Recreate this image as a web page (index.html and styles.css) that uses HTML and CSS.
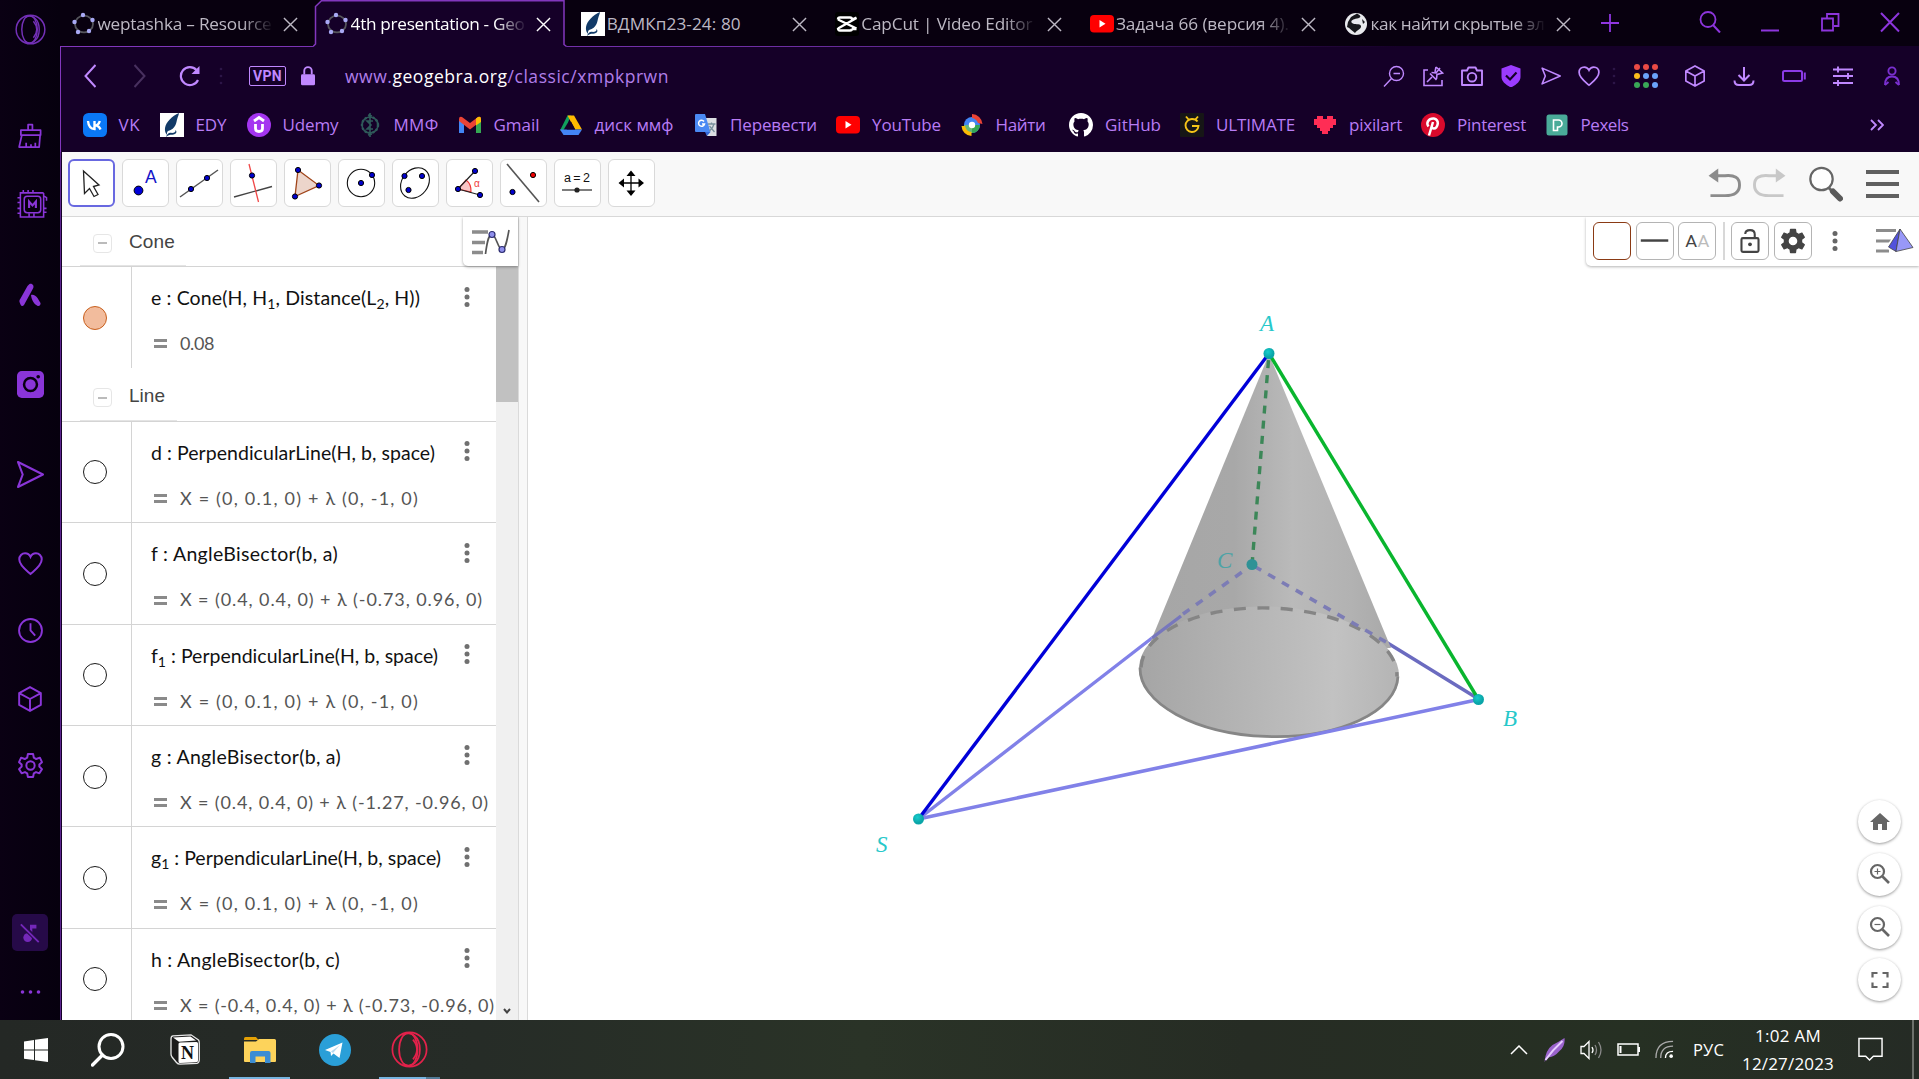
FILE: index.html
```html
<!DOCTYPE html>
<html lang="en">
<head>
<meta charset="utf-8">
<title>4th presentation - GeoGebra</title>
<link rel="stylesheet" href="styles.css">
</head>
<body>
<svg class="defs" width="0" height="0" aria-hidden="true">
  <defs>
    <symbol id="x" viewBox="0 0 16 16"><path d="M1 1L15 15M15 1L1 15" fill="none" stroke="currentColor" stroke-width="1.5"/></symbol>
    <symbol id="ggb" viewBox="0 0 24 24"><ellipse cx="12" cy="12" rx="9" ry="8.4" fill="none" stroke="#55555c" stroke-width="1.8"/><g fill="#a9a9f5"><circle cx="11" cy="3" r="2.2"/><circle cx="20.500" cy="8" r="2.200"/><circle cx="17" cy="19" r="2.200"/><circle cx="6" cy="20" r="2.200"/><circle cx="2.500" cy="10" r="2.200"/></g></symbol>
    <symbol id="quill" viewBox="0 0 24 24"><path fill="#fff" d="M0 0h24v24H0z"/><path fill="#123a68" d="M19 0C12 3 6 9 5 15c-.4 3 .5 5 2 7-.2-2 0-3 1-4 4-1 6-3 7.500-6 1.200-2.500 1-4 2-7 .6-2 1.300-3 1.500-5zM6 24c1-3 3-5 6-4 2 0 4-1 3.500-3 2 2 .5 4-2 4.500-3 .5-5 0-7.500 2.500z"/></symbol>
    <symbol id="yt" viewBox="0 0 24 24"><rect y="3" width="24" height="17.500" rx="4" fill="#f00"/><path d="M9.500 8v7.500l6-3.750z" fill="#fff"/></symbol>
    <symbol id="cube" viewBox="0 0 24 24"><path d="M12 1L22 6.500V17.500L12 23L2 17.500V6.500zM2 6.500L12 12L22 6.500M12 12V23" fill="none" stroke="currentColor" stroke-width="1.800" stroke-linejoin="round"/></symbol>
    <symbol id="heart" viewBox="0 0 24 24"><path d="M12 22C8 18.500 1.200 14 1.200 8C1.200 4.500 3.800 2.200 6.800 2.200C9.200 2.200 11 3.500 12 5.600C13 3.500 14.800 2.200 17.200 2.200C20.200 2.200 22.800 4.500 22.800 8C22.800 14 16 18.500 12 22z" fill="none" stroke="currentColor" stroke-width="1.900"/></symbol>
    <symbol id="send" viewBox="0 0 26 26"><path d="M1 1L25 13L1 25L5.500 13z" fill="none" stroke="currentColor" stroke-width="2" stroke-linejoin="round"/></symbol>
    <symbol id="opera" viewBox="0 0 32 32"><g fill="none" stroke="currentColor" stroke-width="1.500"><circle cx="16" cy="16" r="14.800"/><ellipse cx="15" cy="16" rx="8" ry="14.300"/><path d="M11 3.500C17 -.5 25 5 25 16C25 27 17 32.500 11 28.500M19 7.500C23.500 13 23.500 19 19 24.500"/></g></symbol>
    <symbol id="gear" viewBox="0 0 24 24"><path fill="currentColor" d="M19.430 12.980c.04-.32.070-.64.070-.98s-.03-.66-.07-.98l2.110-1.650c.19-.15.24-.42.120-.64l-2-3.460c-.12-.22-.39-.3-.61-.22l-2.490 1c-.52-.4-1.080-.73-1.690-.98l-.38-2.650C14.460 2.180 14.250 2 14 2h-4c-.25 0-.46.18-.49.420l-.38 2.650c-.61.250-1.170.59-1.690.98l-2.490-1c-.23-.09-.49 0-.61.220l-2 3.460c-.13.220-.07.490.12.640l2.110 1.650c-.04.320-.07.650-.07.980s.03.660.07.980l-2.110 1.650c-.19.150-.24.420-.12.640l2 3.460c.12.220.39.300.61.220l2.490-1c.52.400 1.080.730 1.690.980l.38 2.650c.03.240.24.420.49.420h4c.25 0 .46-.18.490-.42l.38-2.650c.61-.25 1.170-.59 1.690-.98l2.490 1c.23.090.49 0 .61-.22l2-3.460c.12-.22.070-.49-.12-.64l-2.110-1.650zM12 15.500c-1.930 0-3.500-1.570-3.500-3.500s1.570-3.500 3.500-3.500 3.500 1.570 3.500 3.500-1.570 3.500-3.500 3.500z"/></symbol>
    <symbol id="dots" viewBox="0 0 6 22"><g fill="currentColor"><circle cx="3" cy="3.600" r="2.500"/><circle cx="3" cy="11" r="2.500"/><circle cx="3" cy="18.400" r="2.500"/></g></symbol>
  </defs>
</svg>

<div class="screen">
  <aside class="side">
    <svg class="s-opera" viewBox="0 0 32 32"><use href="#opera"/></svg>
    <svg class="s-brush" viewBox="0 0 26 26"><g fill="none" stroke="currentColor" stroke-width="1.800" stroke-linejoin="round"><path d="M10.500 7V1.200H15V7M3 7H23.500V12H3zM4 12L1.200 24.500H22L23 12M8.500 24V20M13.500 24V21.500M18 24V20"/></g></svg>
    <svg class="s-chip" viewBox="0 0 32 32"><g fill="none" stroke="currentColor" stroke-width="1.600"><path d="M28 4H4V29H28V4M7 4V1M12 4V1M17 4V1M4 9H1M4 14H1M4 20H1M4 25H1M28 7L31 9V12M28 20H31M28 24H31M13 29V25M18 29V25"/><rect x="8" y="7.500" width="17" height="17" rx="3"/><path d="M13 19.500V13L16.500 17L20 13V19.500" stroke-width="2.200"/></g></svg>
    <svg class="s-aria" viewBox="0 0 22 24"><path fill="currentColor" d="M10.500 1C13.500 0 15.500 3 14 5.500L5 22C3.500 24 2.500 23 1.500 21.500L.5 19C.2 17.500.8 16.500 1.500 15.500L8.500 3zM12 12C14 11 17 12.500 18.500 15L21.500 20C22 22 20 24 18 22.500C15 21 12.500 17 12 12z"/></svg>
    <svg class="s-insta" viewBox="0 0 28 28"><rect width="28" height="28" rx="5" fill="currentColor"/><circle cx="14" cy="14" r="6.700" fill="none" stroke="#080010" stroke-width="2.600"/><circle cx="22" cy="6" r="1.900" fill="#080010"/></svg>
    <svg class="s-send"><use href="#send"/></svg>
    <svg class="s-heart"><use href="#heart"/></svg>
    <svg class="s-clock" viewBox="0 0 24 24"><g fill="none" stroke="currentColor" stroke-width="1.800"><circle cx="12" cy="12" r="11"/><path d="M12 5V12L16.500 17"/></g></svg>
    <svg class="s-cube"><use href="#cube"/></svg>
    <svg class="s-gear" viewBox="0 0 24 24"><g fill="none" stroke="currentColor" stroke-width="1.900" stroke-linejoin="round"><path d="M9.500 1H14.500L15.200 4.500L17.500 5.800L21 4.500L23 8.800L20.500 11V13L23 15.500L20.500 19.500L17.300 18.300L15.200 19.500L14.500 23H9.500L8.800 19.500L6.700 18.300L3.500 19.500L1 15.500L3.500 13V11L1 8.800L3 4.500L6.500 5.800L8.800 4.500z"/><circle cx="12" cy="12" r="4"/></g></svg>
    <span class="s-music"><svg viewBox="0 0 24 24"><g fill="#7428b8"><circle cx="9.500" cy="17" r="4.800"/><path d="M12 17V3H19V7H14.500V17z"/></g><path d="M2 2L21.500 21.500" stroke="#260a48" stroke-width="5"/><path d="M2 2.500L21.500 22" stroke="#7428b8" stroke-width="2"/></svg></span>
    <svg class="s-more" viewBox="0 0 20 4"><g fill="currentColor"><circle cx="2" cy="2" r="1.800"/><circle cx="10" cy="2" r="1.800"/><circle cx="18" cy="2" r="1.800"/></g></svg>
  </aside>

  <main class="browser">
    <nav class="tabs">
      <div class="tab"><svg class="fav"><use href="#ggb"/></svg><span class="title fade"><span data-w="174">weptashka – Resource</span></span><svg class="close"><use href="#x"/></svg></div>
      <div class="tab active"><svg class="outline" viewBox="0 0 254 48"><path d="M0 46.500L2.500 44V6.500L8.500.7H251V44.500L253.500 46.500V48H0z" fill="#150028"/><path d="M0 46.500L2.500 44V6.500L8.500.7H251V44.500L253.500 46.500" fill="none" stroke="#8237bd" stroke-width="1.500"/></svg><svg class="fav"><use href="#ggb"/></svg><span class="title fade"><span data-w="174">4th presentation - Geo</span></span><svg class="close"><use href="#x"/></svg></div>
      <div class="tab"><svg class="fav"><use href="#quill"/></svg><span class="title"><span data-w="134">ВДМКп23-24: 80</span></span><svg class="close"><use href="#x"/></svg></div>
      <div class="tab"><svg class="fav" viewBox="0 0 24 24"><rect width="24" height="24" rx="3" fill="#000"/><path d="M3 7.500Q3 5.500 5 5.500H15Q17 5.500 17 7.500L21.500 5.500M3 7.500L21.500 16.500M3 16Q3 18.500 5 18.500H15Q17 18.500 17 16.500M3 16.500L21.500 6M17 17H21.500" fill="none" stroke="#fff" stroke-width="2.400"/></svg><span class="title fade"><span data-w="171">CapCut | Video Editor</span></span><svg class="close"><use href="#x"/></svg></div>
      <div class="tab"><svg class="fav"><use href="#yt"/></svg><span class="title fade"><span data-w="173">Задача 66 (версия 4).</span></span><svg class="close"><use href="#x"/></svg></div>
      <div class="tab"><svg class="fav" viewBox="0 0 24 24"><circle cx="12" cy="12" r="11" fill="#e9e9ee"/><path d="M13 1.500C18 4 17 6 13 6.500C9 7 6 9 8 11C10 13 16 11 17 14C17.500 17 13 18 11 21C8 19 6 16 3 15L4 10L7 5z" fill="#17171c"/><path d="M18 7L21 10L19 12zM9 4L12 3L11 6L8 8z" fill="#17171c"/></svg><span class="title fade"><span data-w="174">как найти скрытые эл</span></span><svg class="close"><use href="#x"/></svg></div>
      <svg class="plus" viewBox="0 0 18 18"><path d="M9 0V18M0 9H18" stroke="currentColor" stroke-width="1.800"/></svg>
      <div class="wincontrols">
        <svg viewBox="0 0 22 22"><circle cx="9" cy="8.500" r="7.500" fill="none" stroke="currentColor" stroke-width="1.800"/><path d="M14 14L21 21.500" stroke="currentColor" stroke-width="2"/></svg>
        <svg viewBox="0 0 22 22"><path d="M2 19.500H20" stroke="currentColor" stroke-width="2"/></svg>
        <svg viewBox="0 0 22 22"><g fill="none" stroke="currentColor" stroke-width="1.800"><path d="M3 7.500H14V19.500H3zM8 7V3H19.500V15H15"/></g></svg>
        <svg viewBox="0 0 22 22"><path d="M2 2L20 20.500M20 2L2 20.500" stroke="currentColor" stroke-width="2"/></svg>
      </div>
    </nav>

    <div class="address">
      <svg class="a-back" viewBox="0 0 12 24"><path d="M11.500 1L1.500 12L11.500 23" fill="none" stroke="#c088ff" stroke-width="2"/></svg>
      <svg class="a-fwd" viewBox="0 0 12 24"><path d="M.5 1L10.500 12L.5 23" fill="none" stroke="#48305f" stroke-width="2"/></svg>
      <svg class="a-reload" viewBox="0 0 22 22"><path d="M19 15A9 9 0 1 1 17.500 5" fill="none" stroke="#c088ff" stroke-width="2.200"/><path d="M20.500 1V9H12.500z" fill="#c088ff"/></svg>
      <svg class="a-sep" viewBox="0 0 4 18"><g fill="#2c1547"><circle cx="2" cy="2" r="1.300"/><circle cx="2" cy="9" r="1.300"/><circle cx="2" cy="16" r="1.300"/></g></svg>
      <span class="vpn"><span data-w="29">VPN</span></span>
      <svg class="a-lock" viewBox="0 0 15 21"><path d="M3.500 9V5a4 4 0 0 1 8 0V9" fill="none" stroke="#c088ff" stroke-width="2"/><rect y="8.500" width="15" height="12" rx="1.500" fill="#c088ff"/></svg>
      <span class="url"><span data-w="324">www.<b>geogebra.org</b>/classic/xmpkprwn</span></span>
      <div class="group g1">
        <svg viewBox="0 0 22 22"><g fill="none" stroke="currentColor" stroke-width="1.400"><circle cx="13.500" cy="8.500" r="7"/><path d="M1 21.500L8.500 13.500M10.500 8.500H17"/></g></svg>
        <svg viewBox="0 0 22 22"><g fill="none" stroke="currentColor" stroke-width="1.600"><path d="M6 5H2V20.500H20V15M5 17L10 12M9.500 7.500L14 8L18 3M8 8.500L14.500 15M14 2L20.500 8L15 9.500L14.500 14M14 2L13 7"/></g></svg>
        <svg viewBox="0 0 22 22"><g fill="none" stroke="currentColor" stroke-width="1.900"><path d="M1 5.500H6L7.500 2.500H14.500L16 5.500H21V20H1z" stroke-linejoin="round"/><circle cx="11" cy="12.200" r="4.300"/></g></svg>
        <svg viewBox="0 0 22 22"><path d="M11 0L20.500 3.500V12C20.500 16.500 16 20 11 22.500C6 20 1.500 16.500 1.500 12V3.500z" fill="#9b3bff"/><path d="M6 10.500L10 14.500L16.500 7.500" fill="none" stroke="#150028" stroke-width="2.200"/></svg>
        <svg viewBox="-1 -1 28 28"><path d="M3 3L26 13L3 23L7 13z" fill="none" stroke="currentColor" stroke-width="2" stroke-linejoin="round"/></svg>
        <svg class="hrt"><use href="#heart"/></svg>
      </div>
      <svg class="a-sep2" viewBox="0 0 4 18"><g fill="#2c1547"><circle cx="2" cy="2" r="1.300"/><circle cx="2" cy="9" r="1.300"/><circle cx="2" cy="16" r="1.300"/></g></svg>
      <div class="group g2">
        <svg viewBox="0 0 24 24"><g fill="#ea4a45"><circle cx="3" cy="3" r="3"/><circle cx="12" cy="3" r="3"/><circle cx="21" cy="3" r="3"/></g><circle cx="3" cy="12" r="3" fill="#fbbc1c"/><g fill="#6aa2fa"><circle cx="12" cy="12" r="3"/><circle cx="21" cy="12" r="3"/><circle cx="21" cy="21" r="3"/></g><g fill="#3aa757"><circle cx="3" cy="21" r="3"/><circle cx="12" cy="21" r="3"/></g></svg>
        <svg class="cb" viewBox="0 0 24 24"><use href="#cube"/></svg>
        <svg viewBox="0 0 24 24"><path d="M12 3V16M6.500 11L12 16.500L17.500 11M2.500 16.500Q2.500 21 7 21H17Q21.500 21 21.500 16.500" fill="none" stroke="currentColor" stroke-width="2"/></svg>
        <svg viewBox="0 0 24 24"><rect x="1" y="7" width="19" height="10" rx="1.500" fill="none" stroke="#8b3be6" stroke-width="2"/><path d="M22.800 8.500V15.500" stroke="#8b3be6" stroke-width="2"/></svg>
        <svg viewBox="0 0 24 24"><path d="M2 5.500H22M2 12H22M2 19H22M7 2.500V8.500M17 9V15M7 16V22" stroke="currentColor" stroke-width="1.900"/></svg>
        <svg viewBox="0 0 24 24"><g fill="none" stroke="#7a2fd0" stroke-width="1.900"><circle cx="12" cy="7" r="3.600"/><path d="M5 21Q5 12.500 12 12.500Q19 12.500 19 21M8.500 18L5 21M15.500 18L19 21"/></g></svg>
      </div>
    </div>

    <div class="bookmarks">
      <a><svg viewBox="0 0 24 24"><rect width="24" height="24" rx="5.500" fill="#0a78f6"/><path d="M5 8C5.500 13 7.500 16 11.500 16V8M11.500 12.500C14 12.500 16 11 16.800 8M12 12.300C15 12.500 16.500 14 17.500 16.500" fill="none" stroke="#fff" stroke-width="2.400"/></svg><span data-w="22">VK</span></a>
      <a><svg><use href="#quill"/></svg><span data-w="31">EDY</span></a>
      <a><svg viewBox="0 0 24 24"><circle cx="12" cy="12" r="12" fill="#a435f0"/><path d="M7 8L12 4.500L17 8M8.500 11V15.500Q8.500 18.500 12 18.500Q15.500 18.500 15.500 15.500V11" fill="none" stroke="#fff" stroke-width="2.800"/></svg><span data-w="56">Udemy</span></a>
      <a><svg viewBox="0 0 24 24"><g fill="none" stroke="#2f5a5a" stroke-width="1.600"><circle cx="12" cy="12" r="8"/><circle cx="12" cy="12" r="8" stroke-dasharray="2 2" stroke-width="2.400"/><path d="M12 0V24M15 8H9L13 12L9 16H15M10 2L14 3M10 22L14 21"/></g></svg><span data-w="45">ММФ</span></a>
      <a><svg viewBox="0 0 24 24"><path d="M1 20V6L6 9.500V20z" fill="#4285f4"/><path d="M23 20V6L18 9.500V20z" fill="#34a853"/><path d="M1 6Q1 3 4 4L12 10L20 4Q23 3 23 6V8L12 16.500L1 8z" fill="#ea4335"/><path d="M18 5.500L20 4Q23 3 23 6V9L18 12.500z" fill="#fbbc04"/></svg><span data-w="46">Gmail</span></a>
      <a><svg viewBox="0 0 24 24"><path d="M8.500 2.500H12L9 9.500L4.500 17L1 17.500z" fill="#11a05d"/><path d="M8.500 2.500H15L23 16.500H16z" fill="#ffba00"/><path d="M1 16.500H23L19.500 22H4.500z" fill="#4385f5"/><path d="M12 8.500L16.300 16.500H7.700z" fill="#150028"/></svg><span data-w="79">диск ммф</span></a>
      <a><svg viewBox="0 0 24 24"><path d="M10 5H22.500V23H13z" fill="#dcdfe3"/><path d="M2 1H11L16.500 19H2Q1 19 1 18V2Q1 1 2 1z" fill="#4a89f3"/><path d="M11 19H16.500L13 23z" fill="#3367d6"/><path d="M10 8.500A3 3 0 1 0 10.500 11H8" fill="none" stroke="#fff" stroke-width="1.500"/><path d="M14 11H21.500M17.500 9.500V11M20 11Q19 15 15.500 18M15.500 13L20.500 19" fill="none" stroke="#78909c" stroke-width="1.300"/></svg><span data-w="87">Перевести</span></a>
      <a><svg><use href="#yt"/></svg><span data-w="69">YouTube</span></a>
      <a><svg viewBox="0 0 24 24"><circle cx="12" cy="12" r="8" fill="#4285f4"/><path d="M11.500 12H20A8 8 0 0 1 12 20z" fill="#34a853"/><path d="M4 12H12V20A8 8 0 0 1 4 12z" fill="#6ab97a"/><path d="M12 1A11 11 0 0 1 22.500 11L18 10A8 8 0 0 0 12 5z" fill="#ea4335"/><path d="M1.500 13A10.500 10.500 0 0 0 11.500 23V19Q6 18.500 5 13z" fill="#fbbc04"/><circle cx="12" cy="12" r="3.200" fill="#fff"/></svg><span data-w="50">Найти</span></a>
      <a><svg viewBox="0 0 16 16"><path fill="#fff" d="M8 0C3.580 0 0 3.580 0 8c0 3.540 2.290 6.530 5.470 7.590.4.070.55-.17.55-.38 0-.19-.01-.82-.01-1.490-2.010.37-2.530-.49-2.690-.94-.09-.23-.48-.94-.82-1.130-.28-.15-.68-.52-.01-.53.63-.01 1.080.58 1.230.82.720 1.210 1.870.870 2.330.66.070-.52.280-.87.510-1.070-1.780-.2-3.640-.89-3.640-3.950 0-.87.310-1.590.82-2.150-.08-.2-.36-1.020.08-2.120 0 0 .67-.21 2.200.82.640-.18 1.320-.27 2-.27s1.360.09 2 .27c1.530-1.040 2.200-.82 2.200-.82.440 1.100.160 1.920.08 2.120.51.560.82 1.270.82 2.150 0 3.070-1.870 3.750-3.650 3.950.29.250.54.730.54 1.480 0 1.070-.01 1.930-.01 2.200 0 .21.150.46.550.38A8.010 8.010 0 0 0 16 8c0-4.420-3.580-8-8-8z"/></svg><span data-w="56">GitHub</span></a>
      <a><svg viewBox="0 0 24 24"><rect width="24" height="24" rx="1" fill="#161616"/><path d="M17.500 8.500Q16 6 12 6A6.500 6.500 0 1 0 18.500 13H12M6 3.500L9 7M18 3.500L15 7" fill="none" stroke="#f5c518" stroke-width="1.900"/></svg><span data-w="79">ULTIMATE</span></a>
      <a><svg viewBox="0 0 24 24"><path d="M4 3H10V6H14V3H20V6H23V12H20V15H17V18H15V21H9V18H7V15H4V12H1V6H4z" fill="#ff2d55"/></svg><span data-w="53">pixilart</span></a>
      <a><svg viewBox="0 0 24 24"><circle cx="12" cy="12" r="12" fill="#d90a2c"/><path d="M8 22.500L12 9M7.500 13.500Q5.500 11 7 8.200Q9 5.200 12.800 5.500Q17 6.500 16.800 10.500Q16 15.500 12.800 15.500Q11 15.300 10.800 14" fill="none" stroke="#fff" stroke-width="2.500"/></svg><span data-w="69">Pinterest</span></a>
      <a><svg viewBox="0 0 24 24"><rect x="1.500" y="1.500" width="21" height="21" rx="2.500" fill="#4aab99"/><path d="M8.500 7H13.500A3.300 3.300 0 0 1 13.500 14H12.500V17.500H8.500z" fill="none" stroke="#fff" stroke-width="1.600"/></svg><span data-w="48">Pexels</span></a>
      <svg class="more" viewBox="0 0 14 12"><path d="M1 1L6 6L1 11M8 1L13 6L8 11" fill="none" stroke="#c088ff" stroke-width="1.800"/></svg>
    </div>

    <header class="toolbar">
      <button class="tool sel"><svg viewBox="0 0 46 46"><path d="M16 11L17 33.500L22 28.500L26.500 36.500L30.500 34.500L26 26.500L31.500 25z" fill="#fff" stroke="#222" stroke-width="1.300" transform="translate(-.5,0)"/></svg></button>
      <button class="tool"><svg viewBox="0 0 46 46"><circle cx="16.500" cy="30.500" r="4.400" fill="#0000d8" stroke="#000"/><text x="23" y="22.500" font-size="17.500" fill="#1414c8" class="sans">A</text></svg></button>
      <button class="tool"><svg viewBox="0 0 46 46"><path d="M4 37L42 10" stroke="#555" stroke-width="1.500"/><g fill="#0000cc" stroke="#000"><circle cx="15" cy="29" r="2.600"/><circle cx="31" cy="18" r="2.600"/></g></svg></button>
      <button class="tool"><svg viewBox="0 0 46 46"><path d="M4 37L42 26.500" stroke="#444" stroke-width="1.300"/><path d="M19 4L28.500 42" stroke="#f04848" stroke-width="1.300"/><circle cx="22" cy="15.500" r="2.600" fill="#0000cc" stroke="#000"/></svg></button>
      <button class="tool"><svg viewBox="0 0 46 46"><path d="M14 10L35 25.500L11 36.500z" fill="#ecd5cb" stroke="#a0451a" stroke-width="1.300"/><g fill="#0000cc" stroke="#000"><circle cx="14" cy="10" r="2.600"/><circle cx="35" cy="25.500" r="2.600"/><circle cx="11" cy="36.500" r="2.600"/></g></svg></button>
      <button class="tool"><svg viewBox="0 0 46 46"><circle cx="23" cy="23" r="13.700" fill="none" stroke="#111" stroke-width="1.100"/><g fill="#0000cc" stroke="#000"><circle cx="23" cy="23" r="2.600"/><circle cx="34" cy="15" r="2.600"/></g></svg></button>
      <button class="tool"><svg viewBox="0 0 46 46"><ellipse cx="23" cy="23" rx="13" ry="16.500" transform="rotate(38 23 23)" fill="none" stroke="#111" stroke-width="1.100"/><g fill="#0000cc" stroke="#000"><circle cx="12.500" cy="16" r="2.600"/><circle cx="30" cy="16" r="2.600"/><circle cx="16.500" cy="30" r="2.600"/></g></svg></button>
      <button class="tool"><svg viewBox="0 0 46 46"><path d="M12 29L20 20Q25.500 24 25 32z" fill="#fbc5c5" stroke="#e33" stroke-width="1.100"/><path d="M29 11L12 29L34 35" fill="none" stroke="#222" stroke-width="1.200"/><g fill="#0000cc" stroke="#000"><circle cx="29" cy="11" r="2.600"/><circle cx="12" cy="29" r="2.600"/><circle cx="34" cy="35" r="2.600"/></g><text x="28" y="26.500" font-size="10" fill="#f04040" class="sans">α</text></svg></button>
      <button class="tool"><svg viewBox="0 0 46 46"><path d="M7 4L39 42" stroke="#555" stroke-width="1.600"/><circle cx="12.500" cy="32" r="2.600" fill="#0000cc" stroke="#000"/><circle cx="33" cy="15" r="2.600" fill="#e00" stroke="#000"/></svg></button>
      <button class="tool"><svg viewBox="0 0 46 46"><text x="10" y="21.500" font-size="12.500" fill="#111" class="sans" textLength="26">a=2</text><path d="M8 30H38" stroke="#666" stroke-width="1.700"/><circle cx="23" cy="30" r="2.600" fill="#222"/></svg></button>
      <button class="tool"><svg viewBox="0 0 46 46"><path d="M23 15V31M15 23H31" stroke="#000" stroke-width="1.300"/><path d="M23 10.500L27.500 16H18.500zM23 36L27.500 30.500H18.500zM10.500 23L16 18.500V27.500zM36 23L30.500 18.500V27.500z"/></svg></button>
      <div class="right">
        <svg class="undo" viewBox="0 0 34 32"><path d="M2 28.500H17Q32 28.500 32 17.500T17 8H8" fill="none" stroke="#8c8c8c" stroke-width="3"/><path d="M0 8L10 .5V15z" fill="#8c8c8c"/></svg>
        <svg class="redo" viewBox="0 0 34 32"><path d="M32 28.500H17Q2 28.500 2 17.500T17 8H26" fill="none" stroke="#c8c8c8" stroke-width="3"/><path d="M34 8L24 .5V15z" fill="#c8c8c8"/></svg>
        <svg class="find" viewBox="0 0 34 36"><circle cx="12.500" cy="13" r="11.200" fill="#fff" stroke="#666" stroke-width="2.200"/><path d="M20 22L24 26" stroke="#666" stroke-width="3"/><path d="M24 25.500L31 32.500" stroke="#5a5a5a" stroke-width="6" stroke-linecap="round"/></svg>
        <svg class="burger" viewBox="0 0 33 28"><path d="M0 2H33M0 14H33M0 26H33" stroke="#606060" stroke-width="3.800"/></svg>
      </div>
    </header>

    <section class="workspace">
      <div class="algebra">
        <div class="list">
          <div class="head"><i></i><span data-w="46">Cone</span></div>
          <div class="row first"><div class="mark"><b class="on"></b></div><div class="def"><p><span data-w="269">e : Cone(H, H<sub>1</sub>, Distance(L<sub>2</sub>, H))</span></p><q><em></em><span data-w="34">0.08</span></q></div><svg class="kebab"><use href="#dots"/></svg></div>
          <div class="head line"><i></i><span data-w="36">Line</span></div>
          <div class="row"><div class="mark"><b></b></div><div class="def"><p><span data-w="284">d : PerpendicularLine(H, b, space)</span></p><q><em></em><span data-w="239">X = (0, 0.1, 0) + λ (0, -1, 0)</span></q></div><svg class="kebab"><use href="#dots"/></svg></div>
          <div class="row"><div class="mark"><b></b></div><div class="def"><p><span data-w="187">f : AngleBisector(b, a)</span></p><q><em></em><span data-w="303">X = (0.4, 0.4, 0) + λ (-0.73, 0.96, 0)</span></q></div><svg class="kebab"><use href="#dots"/></svg></div>
          <div class="row"><div class="mark"><b></b></div><div class="def"><p><span data-w="287">f<sub>1</sub> : PerpendicularLine(H, b, space)</span></p><q><em></em><span data-w="239">X = (0, 0.1, 0) + λ (0, -1, 0)</span></q></div><svg class="kebab"><use href="#dots"/></svg></div>
          <div class="row"><div class="mark"><b></b></div><div class="def"><p><span data-w="190">g : AngleBisector(b, a)</span></p><q><em></em><span data-w="309">X = (0.4, 0.4, 0) + λ (-1.27, -0.96, 0)</span></q></div><svg class="kebab"><use href="#dots"/></svg></div>
          <div class="row"><div class="mark"><b></b></div><div class="def"><p><span data-w="290">g<sub>1</sub> : PerpendicularLine(H, b, space)</span></p><q><em></em><span data-w="239">X = (0, 0.1, 0) + λ (0, -1, 0)</span></q></div><svg class="kebab"><use href="#dots"/></svg></div>
          <div class="row"><div class="mark"><b></b></div><div class="def"><p><span data-w="189">h : AngleBisector(b, c)</span></p><q><em></em><span data-w="315">X = (-0.4, 0.4, 0) + λ (-0.73, -0.96, 0)</span></q></div><svg class="kebab"><use href="#dots"/></svg></div>
        </div>
        <div class="scroll"><div class="thumb"></div><svg viewBox="0 0 8 6"><path d="M1 1L4 4.500L7 1" fill="none" stroke="#444" stroke-width="2"/></svg></div>
        <div class="stylebtn"><svg viewBox="0 0 38 26"><path d="M0 3H16M0 13.500H13M0 23.500H11" stroke="#8c8c8c" stroke-width="3.400"/><path d="M13.500 25C15.500 10 17 5.500 20 5.500C24 5.500 26 20.500 30 20.500C33.500 20.500 35 12 37 1" fill="none" stroke="#555" stroke-width="1.700"/><g fill="#8f8fec" stroke="#2c2c70" stroke-width="1.200"><circle cx="20" cy="5.500" r="3"/><circle cx="30" cy="20.500" r="3"/></g></svg></div>
      </div>
      <div class="divider"></div>
      <div class="view3d">
        <svg class="scene" viewBox="528 217 1391 803">
          <defs>
            <linearGradient id="coneSide" gradientUnits="userSpaceOnUse" x1="1152" y1="0" x2="1386" y2="0"><stop offset="0" stop-color="#a6a6a6"/><stop offset=".35" stop-color="#a8a8a8"/><stop offset=".6" stop-color="#bababa"/><stop offset=".85" stop-color="#b2b2b2"/><stop offset="1" stop-color="#aaa"/></linearGradient>
            <linearGradient id="coneBase" gradientUnits="userSpaceOnUse" x1="1139" y1="0" x2="1399" y2="0"><stop offset="0" stop-color="#a5a5a5"/><stop offset=".45" stop-color="#b6b6b6"/><stop offset=".75" stop-color="#c2c2c2"/><stop offset="1" stop-color="#b4b4b4"/></linearGradient>
            <radialGradient id="pt" cx=".4" cy=".35"><stop offset="0" stop-color="#17cccc"/><stop offset="1" stop-color="#0aa5a8"/></radialGradient>
          </defs>
          <path d="M918.500 819L1152 638" stroke="#8181e8" stroke-width="3.400"/>
          <path d="M1386 642L1478.500 699" stroke="#6b6bc0" stroke-width="3.400"/>
          <path d="M1269 354L1148 648H1391z" fill="url(#coneSide)"/>
          <g transform="rotate(2 1269 672)">
            <ellipse cx="1269" cy="672" rx="130" ry="65.500" fill="url(#coneBase)"/>
            <path d="M1140 672A129 64.500 0 0 0 1398 672" fill="none" stroke="#868686" stroke-width="2.800"/>
            <path d="M1141 672A128 64 0 0 1 1397 672" fill="none" stroke="#858585" stroke-width="3.400" stroke-dasharray="12 11.500"/>
          </g>
          <path d="M1152 638L1181 616" stroke="#7777bd" stroke-width="3.400"/>
          <path d="M1183 614L1252 565M1386 642L1252 565" stroke="#7c7cb5" stroke-width="3.600" stroke-dasharray="8 8"/>
          <path d="M1252 565L1269 354" stroke="#3c8758" stroke-width="3.400" stroke-dasharray="8 7.200"/>
          <path d="M918.500 819L1478.500 699.500" stroke="#8181e8" stroke-width="3.600"/>
          <path d="M918.500 819L1269 353.500" stroke="#0000d8" stroke-width="3.400"/>
          <path d="M1269 353.500L1478.500 699.500" stroke="#09b52e" stroke-width="3.400"/>
          <g fill="url(#pt)"><circle cx="1269" cy="353.500" r="5.500"/><circle cx="918.500" cy="819" r="5.500"/><circle cx="1478.500" cy="699.500" r="5.500"/></g>
          <circle cx="1252" cy="564.500" r="5.500" fill="#2f9296"/>
          <g class="pts"><text x="1260" y="331">A</text><text x="1503" y="725.500">B</text><text x="1217" y="568" class="dim">C</text><text x="876" y="852">S</text></g>
        </svg>
        <div class="stylebar">
          <span class="sb color"></span>
          <span class="sb"><svg viewBox="0 0 38 38"><path d="M4 18.500H33" stroke="#444" stroke-width="2.600"/></svg></span>
          <span class="sb"><svg viewBox="0 0 38 38"><text x="6.500" y="25" font-size="17.500" class="rob" fill="#444" textLength="12.500" lengthAdjust="spacingAndGlyphs">A</text><text x="19.500" y="25" font-size="17.500" class="rob" fill="#bbb" textLength="12.500" lengthAdjust="spacingAndGlyphs">A</text></svg></span>
          <i class="vsep"></i>
          <span class="sb"><svg viewBox="0 0 38 38"><rect x="10" y="16" width="18" height="14.500" rx="1.500" fill="none" stroke="#444" stroke-width="2.200"/><path d="M14 11.500Q14 7.500 19 7.500Q24 7.500 24 12V16" fill="none" stroke="#444" stroke-width="2.200"/><circle cx="19" cy="22.500" r="2" fill="#444"/></svg></span>
          <span class="sb"><svg viewBox="-2.600 -2.600 29.200 29.200"><use href="#gear" width="24" height="24"/></svg></span>
          <svg class="kb"><use href="#dots"/></svg>
          <svg class="pyr" viewBox="0 0 38 26"><path d="M0 2.500H20M0 13H16M0 23H13" stroke="#8c8c8c" stroke-width="3"/><path d="M24 1L12.500 19L20 23L38 19.500z" fill="#fff" stroke="#fff" stroke-width="4"/><path d="M24 1L12.500 19L20 23.500z" fill="#5252dc" stroke="#444" stroke-width=".8"/><path d="M24 1L20 23.500L37 19.500z" fill="#9898f8" stroke="#444" stroke-width=".8"/></svg>
        </div>
        <div class="zoomers">
          <span><svg viewBox="0 0 24 24"><path fill="currentColor" d="M10 20v-6h4v6h5v-8h3L12 3 2 12h3v8z"/></svg></span>
          <span><svg viewBox="0 0 24 24"><g fill="none" stroke="currentColor"><circle cx="9.500" cy="9.500" r="6.500" stroke-width="2.200"/><path d="M14.500 14.500L21 21" stroke-width="2.600"/><path d="M6.500 9.500H12.500M9.500 6.500V12.500" stroke-width="1.200"/></g></svg></span>
          <span><svg viewBox="0 0 24 24"><g fill="none" stroke="currentColor"><circle cx="9.500" cy="9.500" r="6.500" stroke-width="2.200"/><path d="M14.500 14.500L21 21" stroke-width="2.600"/><path d="M6.500 9.500H12.500" stroke-width="1.200"/></g></svg></span>
          <span><svg viewBox="0 0 24 24"><path d="M4.500 9.500V5H9.500M14.500 5H19.500V9.500M19.500 14.500V19H14.500M9.500 19H4.500V14.500" fill="none" stroke="currentColor" stroke-width="2.200"/></svg></span>
        </div>
      </div>
    </section>
  </main>
</div>

<footer class="taskbar">
  <div class="apps">
    <span><svg width="24" height="24" viewBox="0 0 24 24"><path fill="#fff" d="M0 3.500L10 2V11.500H0zM11 1.800L24 0V11.500H11zM0 12.500H10V22L0 20.800zM11 12.500H24V24L11 22.300z"/></svg></span>
    <span><svg width="34" height="34" viewBox="0 0 34 34"><circle cx="20" cy="13.500" r="12" fill="none" stroke="#fff" stroke-width="3"/><path d="M11.500 22L1.500 32" stroke="#fff" stroke-width="3.400" stroke-linecap="round"/></svg></span>
    <span><svg width="30" height="31" viewBox="0 0 30 31"><path d="M1 5Q1 2 3 1.800L21 .8L28.500 6Q29.300 7 29.300 9V26Q29 29 27 29.300L10 30.200Q8 30.300 6.500 28.500L2 23Q1 21.500 1 20z" fill="#1b1b1b" stroke="#e8e8e8" stroke-width="1.300"/><path d="M3 3.500L20.500 2.500L26 6.500L9 7.800z" fill="#fff"/><path d="M8.500 10Q8.500 8.500 10 8.500L26.500 8Q28 8 28 9.500V26.500Q28 28 26.500 28.300L10 29Q8.500 29 8.500 27.500z" fill="#fff"/><text x="11" y="24.500" font-size="18" font-weight="bold" class="serif" fill="#111" textLength="14">N</text></svg></span>
    <span class="run"><svg width="32" height="26" viewBox="0 0 32 26"><path d="M0 1.500Q0 0 1.500 0H12L14.500 3H0z" fill="#e3a005"/><path d="M0 4.500H12L15 2H30.500Q32 2 32 3.500V24Q32 25 31 25H1Q0 25 0 24z" fill="#fdd35b"/><path d="M6 26V16Q6 14 8 14H24.500Q26.500 14 26.500 16V26H21V19.500H11.500V26z" fill="#3c8dd3"/></svg></span>
    <span><svg width="32" height="32" viewBox="0 0 32 32"><circle cx="16" cy="16" r="16" fill="#2a9fd8"/><path d="M6 16L23.500 8.500L20.500 24L14.500 19.500L12 22L11.500 18z" fill="#fff"/><path d="M12 17.500L21 11L14 19z" fill="#b9d9ee"/></svg></span>
    <span class="run two"><svg class="tb-opera" width="37" height="37" viewBox="0 0 32 32"><use href="#opera"/></svg></span>
  </div>
  <div class="tray">
    <svg class="t-chev" viewBox="0 0 18 10"><path d="M1 9L9 1L17 9" fill="none" stroke="#fff" stroke-width="1.500"/></svg>
    <svg class="t-feather" viewBox="0 0 20 24"><path d="M0 24Q1 12 8 7Q14 4 20 0Q21 8 15 13Q10 19 3 19.500z" fill="#9a63cc"/><path d="M1 22Q8 12 18 3" fill="none" stroke="#e6ccff" stroke-width="2"/></svg>
    <svg class="t-vol" viewBox="0 0 23 20"><path d="M1 6.500H4L9 1.500V18.500L4 13.500H1z" fill="none" stroke="#fff" stroke-width="1.300"/><path d="M12 7Q14 10 12 13" fill="none" stroke="#fff" stroke-width="1.300"/><path d="M15 5Q18 10 15 15M18.500 2Q23.500 10 18.500 18" fill="none" stroke="#888" stroke-width="1.300"/></svg>
    <svg class="t-bat" viewBox="0 0 23 13"><path d="M1 1H21V12H1zM22.500 4V9" fill="none" stroke="#fff" stroke-width="1.500"/><path d="M3.500 3V10" stroke="#fff" stroke-width="2"/></svg>
    <svg class="t-wifi" viewBox="0 0 20 20"><g fill="none" stroke="#aaa" stroke-width="1.400"><path d="M1 19Q1 1.500 19 1.500M6 19Q6 6.500 19 6.500"/><path d="M11 19Q11 12 19 12" stroke="#fff"/></g><circle cx="17" cy="17" r="1.900" fill="#fff"/></svg>
    <span class="lang"><span data-w="31">РУС</span></span>
    <div class="clock"><span data-w="66">1:02 AM</span><span data-w="92">12/27/2023</span></div>
    <svg class="t-note" viewBox="0 0 26 25"><path d="M1 1H25V19.500H16L12 23.500L8 19.500H1z" fill="none" stroke="#fff" stroke-width="1.500"/></svg>
    <i class="peek"></i>
  </div>
</footer>
<script src="fit.js"></script>
</body>
</html>
```
FILE: fit.js
```js
// Track each label out or in so that it fills its slot (data-w, in px).
document.querySelectorAll('[data-w]').forEach(function (el) {
  var natural = el.getBoundingClientRect().width;
  var count = el.textContent.length;
  el.style.letterSpacing = ((parseFloat(el.dataset.w) - natural) / count).toFixed(3) + 'px';
});
```
FILE: styles.css
```css
* { box-sizing: border-box; }
html, body { margin: 0; height: 1079px; overflow: hidden; }
body { font-family: "Open Sans", "Noto Sans", sans-serif; background: #fff; }
svg { display: block; flex: none; }
.defs { position: absolute; }
[data-w] { display: inline-block; white-space: nowrap; }
.sans { font-family: "Liberation Sans", sans-serif; }
.rob { font-family: Roboto, sans-serif; }
.serif { font-family: "Liberation Serif", serif; }

.screen { display: flex; height: 1020px; }

/* Opera sidebar */
.side { width: 60px; background: linear-gradient(90deg, #0a0013, #06000e); color: #8a35d8; display: flex; flex-direction: column; align-items: center; padding-top: 14px; }
.side > * { flex: none; }
.s-opera { width: 31px; height: 31px; color: #7430b8; }
.s-brush { width: 25px; height: 26px; margin-top: 78px; }
.s-chip { width: 32px; height: 31px; margin: 40px 0 0 4px; }
.s-aria { width: 22px; height: 24px; margin-top: 63px; }
.s-insta { width: 27px; height: 27px; margin-top: 64px; }
.s-send { width: 27px; height: 27px; margin-top: 63px; }
.s-heart { width: 25px; height: 25px; margin-top: 63px; }
.s-clock { width: 25px; height: 25px; margin-top: 42px; }
.s-cube { width: 26px; height: 26px; margin-top: 43px; }
.s-gear { width: 25px; height: 25px; margin-top: 41px; }
.s-music { width: 36px; height: 37px; margin-top: 136px; border-radius: 5px; background: #260a48; display: grid; place-items: center; }
.s-music svg { width: 22px; height: 22px; }
.s-more { width: 21px; height: 4px; margin-top: 39px; }

.browser { flex: 1; display: flex; flex-direction: column; min-width: 0; background: linear-gradient(90deg, #5d2690 1px, #150028 1px) 0 0 / 2px 100% no-repeat; }

/* Tabs */
.tabs { height: 47px; background: linear-gradient(#08000f 0, #08000f 46px, transparent 46px), linear-gradient(90deg, #8237bd 0, #6b2da0 40%, #150028 72%); display: flex; color: #bdb8c4; padding-left: 1px; }
.tab { width: 254.6px; display: flex; align-items: center; padding: 0 0 0 10.500px; position: relative; flex: none; }
.fav { width: 24px; height: 24px; margin-right: 2px; position: relative; }
.title { width: 176px; overflow: hidden; font-size: 17.200px; line-height: 26px; position: relative; }
.fade { -webkit-mask-image: linear-gradient(90deg, #000 82%, transparent 100%); mask-image: linear-gradient(90deg, #000 82%, transparent 100%); }
.close { width: 15px; height: 15px; margin-left: 9.500px; position: relative; top: 1px; }
.active { color: #fff; padding-left: 9px; }
.outline { position: absolute; left: -3px; top: 0; width: 254px; height: 48px; }
.plus { width: 18px; height: 18px; margin: 14px 0 0 12.500px; color: #9036e0; }
.wincontrols { display: flex; gap: 38px; margin: 11px 18px 0 auto; color: #8d35dc; }
.wincontrols svg { width: 22px; height: 22px; }

/* Address bar */
.address { height: 55px; background: #150028; border-left: 1.500px solid #8237bd; display: flex; align-items: center; padding: 3px 0 0 23px; color: #c088ff; }
.a-back { width: 12px; height: 24px; }
.a-fwd { width: 12px; height: 24px; margin-left: 38px; }
.a-reload { width: 22px; height: 22px; margin-left: 33px; }
.a-sep { width: 4px; height: 18px; margin-left: 18px; }
.vpn { width: 37px; height: 20px; margin-left: 26px; border: 1.500px solid #c088ff; border-radius: 2px; display: grid; place-items: center; font: bold 14px/18px Roboto, sans-serif; }
.a-lock { width: 14px; height: 20px; margin-left: 15px; }
.url { margin: 0 auto 1px 30px; font-size: 17.500px; color: #b07ee8; line-height: 26px; }
.url b { font-weight: 500; color: #fff; }
.group { display: flex; }
.g1 { gap: 17px; }
.g1 svg { width: 22px; height: 22px; }
.a-sep2 { width: 4px; height: 18px; margin: 0 18px 0 12px; }
.g2 { gap: 25.200px; margin-right: 15px; }
.g2 svg { width: 24px; height: 24px; }
.g2 svg.cb { padding: 1px; }

/* Bookmarks */
.bookmarks { height: 50px; background: #150028; border-left: 1.500px solid #8237bd; display: grid; grid-template-columns: 77px 87px 111px 100px 101px 135.500px 142px 123.500px 109.500px 111px 133px 108px 123.500px 1fr auto; align-items: center; padding: 0 35px 5px 21.500px; }
.bookmarks a { display: flex; align-items: center; gap: 12px; color: #b87cf5; font-size: 17px; line-height: 24px; }
.bookmarks a svg { width: 24px; height: 24px; }
.more { width: 14px; height: 12px; }

/* GeoGebra toolbar */
.toolbar { height: 65px; margin-left: 2px; background: #f8f8f8; border-bottom: 1px solid #d8d8d8; display: flex; align-items: center; gap: 7px; padding: 0 20px 3px 6px; }
.tool { width: 47px; height: 48px; padding: 0; border: 1px solid #d9d9d9; border-radius: 6px; background: #fff; display: flex; align-items: center; justify-content: center; flex: none; }
.tool svg { width: 46px; height: 46px; margin: -2px -2px -2px -3px; }
.tool.sel { border: 2px solid #6868e0; }
.right { margin-left: auto; display: flex; align-items: center; padding-top: 2px; }
.undo { width: 34px; height: 31px; }
.redo { width: 34px; height: 31px; margin-left: 10px; }
.find { width: 34px; height: 36px; margin-left: 23px; }
.burger { width: 33px; height: 28px; margin-left: 23px; }

.workspace { flex: 1; min-height: 0; margin-left: 2px; display: flex; background: #fff; }

/* Algebra list */
.algebra { width: 456px; display: flex; position: relative; }
.list { width: 434px; overflow: hidden; }
.head { height: 50px; display: flex; align-items: center; padding: 0 0 0 31px; border-bottom: 1px solid #d4d4d4; font: 19px/24px "Liberation Sans", sans-serif; color: #444; background: linear-gradient(#e4e4e4, #e4e4e4) 18px 100% / 106px 1px no-repeat; }
.head i { width: 19px; height: 19px; margin: 3px 17px 0 0; border: 1.500px solid #e6e6e6; border-radius: 4px; background: linear-gradient(#bbb, #bbb) center / 9px 2px no-repeat; }
.head.line { height: 53.400px; padding-top: 3px; background-size: 97px 1px; }
.row { height: 101.400px; display: grid; grid-template-columns: 70px 1fr; border-bottom: 1px solid #d4d4d4; position: relative; }
.row.first { border-bottom: 0; }
.mark { border-right: 1px solid #d4d4d4; display: grid; place-items: center; padding: 1px 3px 0 0; }
.mark b { width: 24px; height: 24px; border: 1.500px solid #1c1c1c; border-radius: 50%; background: #fff; }
.mark b.on { background: #f2bc9d; border-color: #c8601e; }
.def { padding: 18px 0 0 19px; font-family: Lato, sans-serif; }
.def p { margin: 0; height: 26px; font-size: 19.500px; line-height: 26px; color: #111; white-space: nowrap; }
.row.first .def { padding-top: 17.500px; }
.def sub { font-size: 14px; line-height: 0; vertical-align: -4px; }
.def q { quotes: none; display: flex; align-items: center; margin-top: 20px; font-size: 18px; line-height: 24px; color: #555; }
.def em { width: 13px; height: 9px; margin: 2px 13px 0 3px; border: solid #8a8a8a; border-width: 3px 0; }
.kebab { position: absolute; left: 402px; top: 18.500px; width: 6px; height: 22px; color: #707070; }
.scroll { width: 22px; background: #f0f0f0; display: flex; flex-direction: column; justify-content: space-between; align-items: center; padding-bottom: 6px; }
.thumb { width: 22px; height: 136px; margin-top: 49px; background: #c1c1c1; }
.scroll svg { width: 8px; height: 6px; }
.stylebtn { position: absolute; right: 0; top: 0; width: 55px; height: 49px; background: #fff; border-radius: 0 0 0 5px; box-shadow: 0 1px 3px rgba(0,0,0,.35); display: grid; place-items: center; }
.stylebtn svg { width: 38px; height: 26px; }
.divider { width: 10px; background: #f8f8f8; border: solid #dadada; border-width: 0 1px; }

/* 3D view */
.view3d { flex: 1; position: relative; min-width: 0; overflow: hidden; }
.scene { width: 1391px; height: 803px; }
.scene text { font: italic 23px "Liberation Serif", serif; fill: #27c8ca; }
.scene text.dim { fill: #4ea3a6; }
.stylebar { position: absolute; right: 0; top: 0; width: 333px; height: 49px; background: #fff; border-radius: 0 0 0 5px; box-shadow: 0 1px 3px rgba(0,0,0,.3); display: flex; align-items: center; padding: 0 5px 2px 7px; gap: 4.500px; }
.sb { width: 38px; height: 38px; border: 1px solid #b4b4b4; border-radius: 6px; flex: none; }
.sb.color { border: 1.500px solid #8a3a14; }
.sb svg { width: 36px; height: 36px; color: #444; }
.vsep { width: 2px; height: 38px; background: #d8d8d8; margin: 0 2px; }
.kb { width: 6px; height: 22px; color: #666; margin-left: 16px; }
.pyr { width: 38px; height: 26px; margin-left: auto; }
.zoomers { position: absolute; right: 18px; top: 583px; display: flex; flex-direction: column; gap: 9.800px; color: #666; }
.zoomers span { width: 43px; height: 43px; border-radius: 50%; background: #fff; box-shadow: 0 1px 3px rgba(0,0,0,.4); display: grid; place-items: center; }
.zoomers svg { width: 24px; height: 24px; }

/* Windows taskbar */
.taskbar { height: 59px; background: linear-gradient(90deg, #242825 0, #262c27 25%, #2a3327 45%, #262c24 65%, #263023 85%, #252b25 100%); display: flex; justify-content: space-between; }
.apps { display: flex; }
.apps span { width: 75px; height: 59px; display: grid; place-items: center; }
.apps span:first-child { width: 72px; }
.apps span:nth-child(2) svg { margin-right: 3px; }
.apps span.run { background: linear-gradient(#77b4e0, #77b4e0) center bottom / 61px 2px no-repeat; }
.apps span.two { background: linear-gradient(90deg, #77b4e0 77%, #527a96 77%) center bottom / 61px 2px no-repeat; }
.tb-opera { color: #e3224b; }
.tray { display: flex; align-items: center; color: #fff; }
.t-chev { width: 18px; height: 10px; }
.t-feather { width: 21px; height: 24px; margin-left: 16px; }
.t-vol { width: 23px; height: 20px; margin-left: 15px; }
.t-bat { width: 23px; height: 13px; margin-left: 14px; }
.t-wifi { width: 19px; height: 19px; margin-left: 15px; }
.lang { margin-left: 19px; font-size: 16.500px; line-height: 24px; }
.clock { width: 92px; margin-left: 18px; display: flex; flex-direction: column; align-items: center; font-size: 17px; line-height: 28px; }
.t-note { width: 25px; height: 25px; margin-left: 24px; }
.peek { width: 2px; height: 59px; background: #6c706b; margin: 0 5px 0 29px; }
```
